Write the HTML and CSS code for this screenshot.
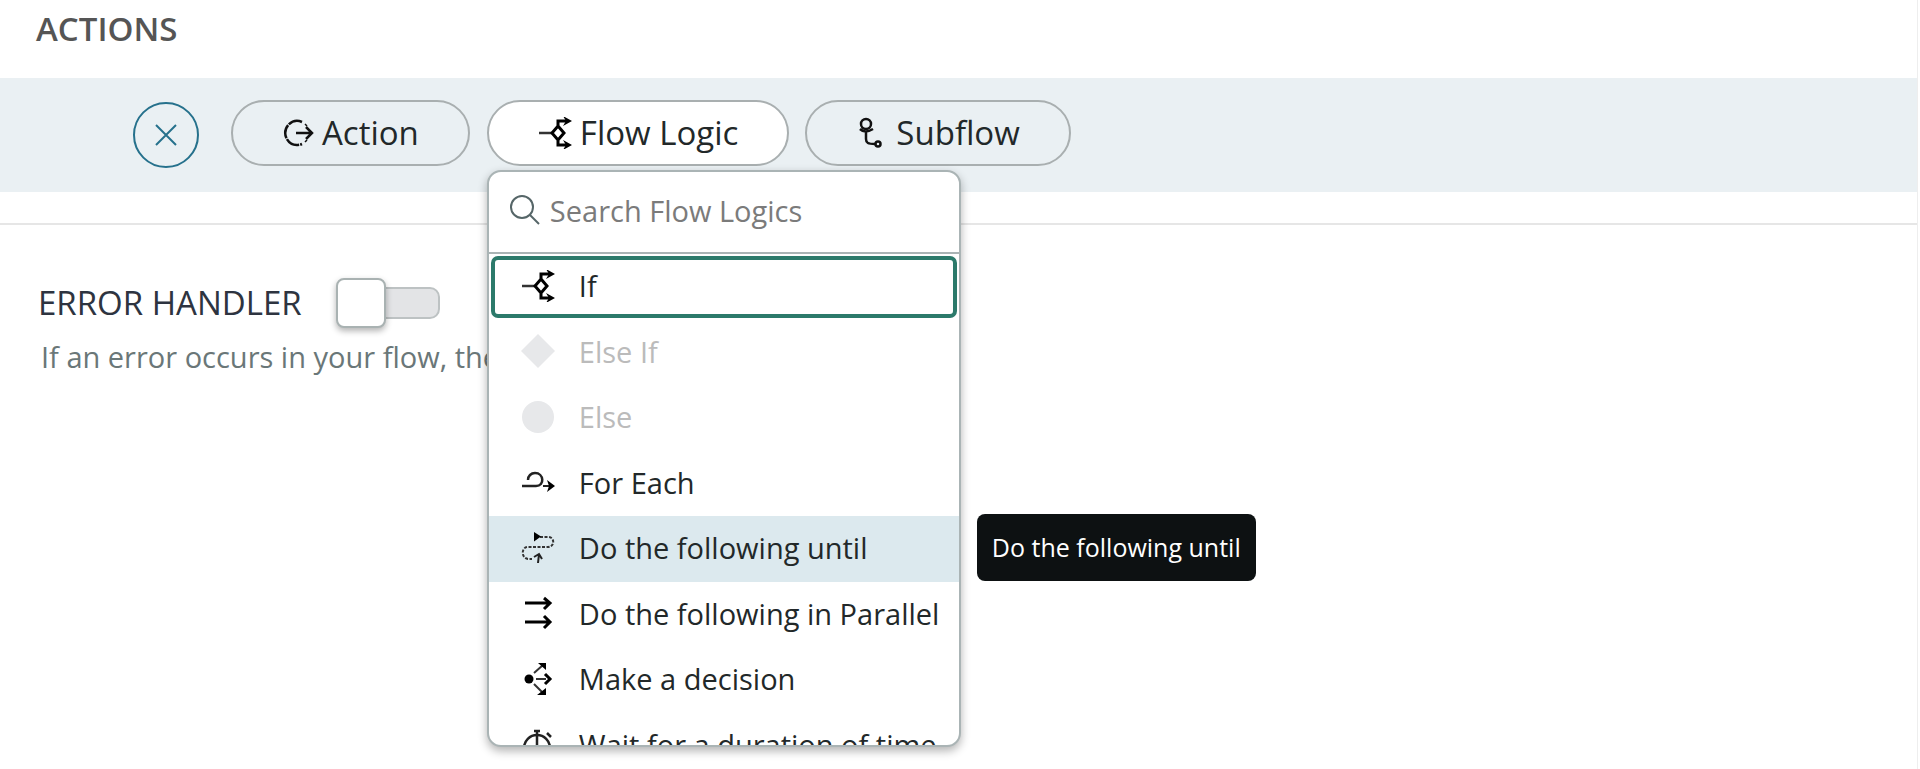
FILE: index.html
```html
<!DOCTYPE html>
<html lang="en">
<head>
<meta charset="utf-8">
<title>Flow Designer</title>
<link rel="stylesheet" href="styles.css">
</head>
<body>
<svg class="defs" aria-hidden="true">
  <symbol id="branch" viewBox="0 0 34 32">
    <path d="M1 16H14" stroke="#333" stroke-width="2.5" fill="none"/>
    <path d="M20 9l6 7-6 7-6-7zM20 9V4h8M20 23v5h8" stroke="#000" stroke-width="3" fill="none"/>
    <path d="M25 -1l9 5-9 5 3-5zM25 23l9 5-9 5 3-5z"/>
  </symbol>
</svg>
<main class="page">
  <h1 class="title">ACTIONS</h1>
  <div class="toolbar">
    <button class="close" type="button" aria-label="Close">
      <svg width="24" height="24" viewBox="0 0 24 24"><path d="M2 2l20 20M22 2L2 22" stroke="#26718c" stroke-width="2" fill="none"/></svg>
    </button>
    <button class="pill" type="button">
      <svg width="32" height="32" viewBox="0 0 32 32"><g fill="none" stroke="#111" stroke-width="2.5"><path d="M20 5A12 12 0 1 0 20 27" stroke-dasharray="14 1"/><path d="M23 7l2 2M23 25l2-2" stroke-width="1.5"/><path d="M14 16h15M24 10l6 6-6 6"/></g></svg>
      <span>Action</span>
    </button>
    <div class="picker">
      <button class="pill pill-open" type="button" aria-expanded="true">
        <svg width="34" height="32"><use href="#branch"/></svg>
        <span>Flow Logic</span>
      </button>
      <div class="popup">
        <div class="panel">
          <label class="search">
            <svg width="32" height="32" viewBox="0 0 32 32"><g fill="none" stroke="#566668" stroke-width="2"><circle cx="13" cy="13" r="11"/><path d="M21 21l9 9"/></g></svg>
            <input type="text" placeholder="Search Flow Logics" aria-label="Search Flow Logics">
          </label>
          <div class="list">
            <button class="item item-focus" type="button"><svg width="34" height="32"><use href="#branch"/></svg>If</button>
            <button class="item" type="button" disabled><svg width="34" height="34" viewBox="0 0 34 34"><path d="M17 0l17 17-17 17L0 17z" fill="#e7e8ea"/></svg>Else If</button>
            <button class="item" type="button" disabled><svg width="34" height="34" viewBox="0 0 34 34"><circle cx="17" cy="17" r="16" fill="#e7e8ea"/></svg>Else</button>
            <button class="item" type="button"><svg width="34" height="32" viewBox="0 0 34 32"><path d="M1 20h14c9 0 8-13-1-13-4 0-7 3-7 7" fill="none" stroke="#222" stroke-width="2.5"/><path d="M22 20h7" stroke="#222" stroke-width="2"/><path d="M26 14l8 6-8 6 2-6z"/></svg>For Each</button>
            <button class="item item-hover" type="button"><svg width="34" height="32" viewBox="0 0 34 32"><path d="M19 5h8c7 0 7 10 0 10H7c-7 0-7 11 0 12h4" fill="none" stroke="#333" stroke-width="2" stroke-dasharray="3 1.5"/><path d="M13 0l7 4.500-7 5z"/><path d="M17 31l1-9M13 25l5-3 3 5" fill="none" stroke="#222" stroke-width="2"/></svg>Do the following until</button>
            <button class="item" type="button"><svg width="34" height="32" viewBox="0 0 34 32"><path d="M4 6h25M23 1l6 5-6 6M4 25h25M23 19l6 6-6 6" fill="none" stroke="#000" stroke-width="3"/></svg>Do the following in Parallel</button>
            <button class="item" type="button"><svg width="34" height="34" viewBox="0 0 34 34"><circle cx="8" cy="17" r="4.500"/><path d="M13 11l9-8M15 17h10M13 22l8 8" stroke="#333" stroke-width="2"/><path d="M17 1h8v7zM16 33l9 0V26z"/><path d="M24 12l5 5-5 5" fill="none" stroke="#000" stroke-width="3"/></svg>Make a decision</button>
            <button class="item" type="button"><svg width="34" height="34" viewBox="0 0 34 34"><g fill="none" stroke="#222" stroke-width="2.5"><circle cx="16" cy="21" r="13"/><path d="M16 3v18M13 4h6M26 6l4 4"/></g></svg>Wait for a duration of time</button>
          </div>
        </div>
        <div class="tooltip" role="tooltip">Do the following until</div>
      </div>
    </div>
    <button class="pill" type="button">
      <svg width="32" height="32" viewBox="0 0 32 32"><g fill="none" stroke="#111" stroke-width="2.5"><circle cx="10" cy="7" r="5"/><path d="M4 12c3 3 8 3 13 0M10 14v8c0 4 2 5 9 5"/><circle cx="22" cy="27" r="2.5"/></g></svg>
      <span>Subflow</span>
    </button>
  </div>
  <section class="errors">
    <div class="error-head">
      <label for="handler">ERROR HANDLER</label>
      <input class="switch" id="handler" type="checkbox" role="switch">
    </div>
    <p class="hint">If an error occurs in your flow, the</p>
  </section>
</main>
</body>
</html>
```
FILE: styles.css
```css
*,
*::before,
*::after {
  box-sizing: border-box;
}

body {
  margin: 0;
  overflow: hidden;
  background: #fff;
  font-family: "Open Sans", "Noto Sans", sans-serif;
  color: #222829;
}

button,
input {
  font: inherit;
  color: inherit;
}

svg {
  flex: none;
  overflow: visible;
}

.defs {
  position: absolute;
  width: 0;
  height: 0;
}

.page {
  min-height: 100vh;
  margin-right: 2px;
  border-right: 1px solid #eee;
}

.title {
  margin: 0;
  padding: 5px 36px 25px;
  font-size: 33px;
  line-height: 48px;
  font-weight: 600;
  color: #555;
}

.toolbar {
  display: flex;
  align-items: center;
  height: 114px;
  padding: 0 133px 4px;
  background: #eaf0f3;
}

.close {
  display: grid;
  place-items: center;
  width: 66px;
  height: 66px;
  margin: 4px 32px 0 0;
  padding: 0;
  border: 2px solid #26718c;
  border-radius: 50%;
  background: none;
}

.pill {
  display: flex;
  align-items: center;
  gap: 8px;
  height: 66px;
  padding: 0 49px;
  border: 2px solid #a9afb0;
  border-radius: 33px;
  background: none;
  font-size: 33px;
  line-height: 48px;
}

.picker {
  position: relative;
  margin: 0 16px 0 17px;
}

.pill-open {
  background: #fff;
}

.popup {
  position: absolute;
  z-index: 2;
  top: 70px;
  left: 0;
  width: 474px;
}

.panel {
  height: 577px;
  overflow: hidden;
  border: 2px solid #aab4b5;
  border-radius: 14px;
  background: #fff;
  box-shadow: 0 4px 10px rgba(0, 0, 0, 0.3);
}

.search {
  display: flex;
  align-items: center;
  gap: 9px;
  height: 82px;
  padding: 0 20px 4px;
  border-bottom: 2px solid #aab4b5;
}

.search input {
  flex: 1;
  min-width: 0;
  padding: 0;
  border: 0;
  outline: 0;
  background: none;
  font-size: 29px;
}

.search input::placeholder {
  color: #7b7b7b;
  opacity: 1;
}

.list {
  display: grid;
  grid-template-rows: repeat(8, 1fr);
  height: 524px;
}

.item {
  display: flex;
  align-items: center;
  gap: 24px;
  padding: 0 20px 2px 32px;
  border: 0;
  background: none;
  font-size: 29px;
  white-space: nowrap;
  text-align: left;
}

.item:disabled {
  color: #bbb;
}

.item-focus {
  margin: 2px;
  padding: 0 26px 2px;
  border: 4px solid #2c7a6b;
  border-radius: 7px;
}

.item-hover {
  background: #dce9ee;
}

.tooltip {
  position: absolute;
  top: 344px;
  left: 490px;
  padding: 16px 15px;
  border-radius: 8px;
  background: #0d1112;
  color: #fff;
  font-size: 25px;
  line-height: 35px;
  white-space: nowrap;
}

.errors {
  margin-top: 31px;
  padding: 52px 38px;
  border-top: 2px solid #e6e6e6;
}

.error-head {
  display: flex;
  align-items: center;
  gap: 34px;
  font-size: 33px;
  line-height: 52px;
  color: #2e3440;
}

.switch {
  position: relative;
  appearance: none;
  width: 104px;
  height: 50px;
  margin: 0;
}

.switch::before {
  content: "";
  position: absolute;
  inset: 9px 0 9px 9px;
  border: 2px solid #bdc2c3;
  border-radius: 10px;
  background: #e3e4e6;
}

.switch::after {
  content: "";
  position: absolute;
  inset: 0 auto 0 0;
  width: 50px;
  border: 2px solid #a9b2b2;
  border-radius: 8px;
  background: #fff;
  box-shadow: 0 3px 6px rgba(0, 0, 0, 0.3);
}

.hint {
  margin: 8px 3px;
  font-size: 29px;
  line-height: 40px;
  color: #6a7778;
}
```
